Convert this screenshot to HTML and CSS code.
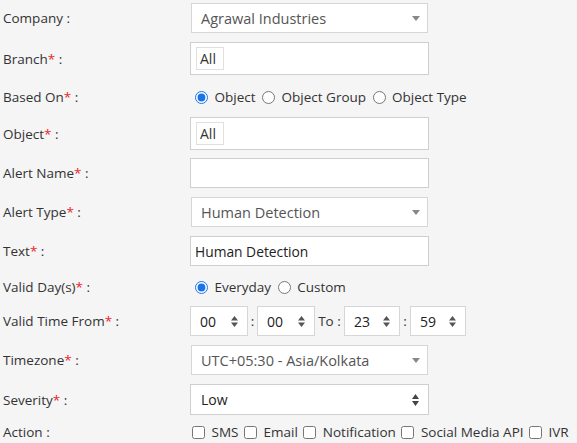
FILE: index.html
```html
<!DOCTYPE html>
<html>
<head>
<meta charset="utf-8">
<link rel="stylesheet" href="styles.css">
</head>
<body>
<div class="form">
  <div class="row r-first">
    <div class="label">Company :</div>
    <div class="field">
      <div class="s2"><span class="s2-text">Agrawal Industries</span><svg class="caret" width="8" height="5" viewBox="0 0 8 5"><path d="M0 0H8L4 5Z" fill="#888"/></svg></div>
    </div>
  </div>
  <div class="row r-tags">
    <div class="label">Branch<span class="req">*</span> :</div>
    <div class="field">
      <div class="tags"><span class="chip">All</span></div>
    </div>
  </div>
  <div class="row r-radio1">
    <div class="label">Based On<span class="req">*</span> :</div>
    <div class="field opts">
      <input type="radio" name="based" checked> Object <input type="radio" name="based"> Object Group <input type="radio" name="based"> Object Type
    </div>
  </div>
  <div class="row r-tags2">
    <div class="label">Object<span class="req">*</span> :</div>
    <div class="field">
      <div class="tags"><span class="chip">All</span></div>
    </div>
  </div>
  <div class="row r-std">
    <div class="label">Alert Name<span class="req">*</span> :</div>
    <div class="field">
      <div class="inp"></div>
    </div>
  </div>
  <div class="row r-std">
    <div class="label">Alert Type<span class="req">*</span> :</div>
    <div class="field">
      <div class="s2"><span class="s2-text">Human Detection</span><svg class="caret" width="8" height="5" viewBox="0 0 8 5"><path d="M0 0H8L4 5Z" fill="#888"/></svg></div>
    </div>
  </div>
  <div class="row r-std">
    <div class="label">Text<span class="req">*</span> :</div>
    <div class="field">
      <div class="inp">Human Detection</div>
    </div>
  </div>
  <div class="row r-radio2">
    <div class="label">Valid Day(s)<span class="req">*</span> :</div>
    <div class="field opts">
      <input type="radio" name="days" checked> Everyday <input type="radio" name="days"> Custom
    </div>
  </div>
  <div class="row r-std">
    <div class="label">Valid Time From<span class="req">*</span> :</div>
    <div class="field time">
      <div class="num"><span>00</span><svg width="7" height="11" viewBox="0 0 7 11"><path d="M3.5 0L7 4.5H0Z M3.5 11L0 6.5H7Z" fill="#555"/></svg></div>
      <span class="sep">:</span>
      <div class="num"><span>00</span><svg width="7" height="11" viewBox="0 0 7 11"><path d="M3.5 0L7 4.5H0Z M3.5 11L0 6.5H7Z" fill="#555"/></svg></div>
      <span class="to">To :</span>
      <div class="num n2"><span>23</span><svg width="7" height="11" viewBox="0 0 7 11"><path d="M3.5 0L7 4.5H0Z M3.5 11L0 6.5H7Z" fill="#555"/></svg></div>
      <span class="sep">:</span>
      <div class="num n2"><span>59</span><svg width="7" height="11" viewBox="0 0 7 11"><path d="M3.5 0L7 4.5H0Z M3.5 11L0 6.5H7Z" fill="#555"/></svg></div>
    </div>
  </div>
  <div class="row r-std">
    <div class="label">Timezone<span class="req">*</span> :</div>
    <div class="field">
      <div class="s2"><span class="s2-text">UTC+05:30 - Asia/Kolkata</span><svg class="caret" width="8" height="5" viewBox="0 0 8 5"><path d="M0 0H8L4 5Z" fill="#888"/></svg></div>
    </div>
  </div>
  <div class="row r-sev">
    <div class="label">Severity<span class="req">*</span> :</div>
    <div class="field">
      <div class="sel"><span>Low</span><svg width="7" height="12" viewBox="0 0 7 12"><path d="M3.5 0L7 5H0Z M3.5 12L0 7H7Z" fill="#444"/></svg></div>
    </div>
  </div>
  <div class="row r-action">
    <div class="label">Action :</div>
    <div class="field checks">
      <input type="checkbox"> SMS <input type="checkbox"> Email <input type="checkbox"> Notification <input type="checkbox"> Social Media API <input type="checkbox"> IVR
    </div>
  </div>
</div>
</body>
</html>
```

FILE: styles.css
```css
html, body {
  margin: 0;
  padding: 0;
  background: #f5f5f5;
}
body {
  font-family: "Open Sans", "Noto Sans", sans-serif;
  font-size: 13.5px;
  color: #333;
  width: 577px;
  height: 443px;
  overflow: hidden;
}
.form {
  padding: 3px 0 0 3px;
}
.row {
  display: grid;
  grid-template-columns: 187px 1fr;
  align-items: center;
  margin-bottom: 9px;
}
.r-first { height: 30px; }
.r-tags { height: 33px; }
.r-radio1 { height: 25px; margin-bottom: 8px; }
.r-tags2 { height: 33px; margin-bottom: 8px; }
.r-std { height: 30px; }
.r-radio2 { height: 24px; margin-bottom: 7px; }
.r-sev { height: 31px; margin-bottom: 7px; }
.r-action { height: 20px; margin-bottom: 0; }
.label {
  white-space: nowrap;
  color: #333;
}
.req { color: #e8262a; }
.field {
  display: flex;
  align-items: center;
  height: 100%;
}
.s2 {
  box-sizing: border-box;
  margin-left: 1px;
  width: 237px;
  height: 30px;
  background: #fff;
  border: 1px solid #d6d6d6;
  display: flex;
  align-items: center;
  justify-content: space-between;
  padding: 0 7px 0 9px;
  color: #555;
  font-size: 14.5px;
}
.caret { margin-top: 1px; }
.tags {
  box-sizing: border-box;
  width: 239px;
  height: 33px;
  background: #fff;
  border: 1px solid #cfcfcf;
  display: flex;
  align-items: center;
  padding-left: 5px;
}
.chip {
  box-sizing: border-box;
  height: 23px;
  width: 28px;
  border: 1px solid #e0e0e0;
  line-height: 21px;
  padding-left: 3px;
  color: #333;
  font-size: 14px;
}
.inp {
  box-sizing: border-box;
  width: 239px;
  height: 30px;
  background: #fff;
  border: 1px solid #cfcfcf;
  display: flex;
  align-items: center;
  padding-left: 4px;
  color: #222;
  font-size: 13.8px;
}
.opts, .checks {
  display: block;
  height: auto;
  line-height: 20px;
  white-space: nowrap;
}
.opts input[type=radio] {
  width: 13px;
  height: 13px;
  margin: 0 3px 0 3px;
  vertical-align: -2px;
  accent-color: #1a73e8;
}
.opts input[type=radio]:first-child {
  margin-left: 5px;
}
.checks input[type=checkbox] {
  width: 13px;
  height: 13px;
  margin: 0 3px 0 2px;
  vertical-align: -2px;
}
.time {
  display: flex;
  align-items: center;
}
.num {
  box-sizing: border-box;
  width: 58px;
  height: 30px;
  background: #fff;
  border: 1px solid #d6d6d6;
  display: flex;
  align-items: center;
  justify-content: space-between;
  padding: 0 9px 0 9px;
  color: #222;
  font-size: 14px;
}
.num.n2 { width: 56px; }
.sep {
  width: 9px;
  text-align: center;
}
.sep:last-of-type { width: 10px; }
.to {
  width: 29px;
  text-align: center;
  white-space: nowrap;
}
.sel {
  box-sizing: border-box;
  width: 239px;
  height: 31px;
  background: #fff;
  border: 1px solid #cfcfcf;
  display: flex;
  align-items: center;
  justify-content: space-between;
  padding: 0 9px 0 10px;
  color: #222;
  font-size: 14px;
}
```
